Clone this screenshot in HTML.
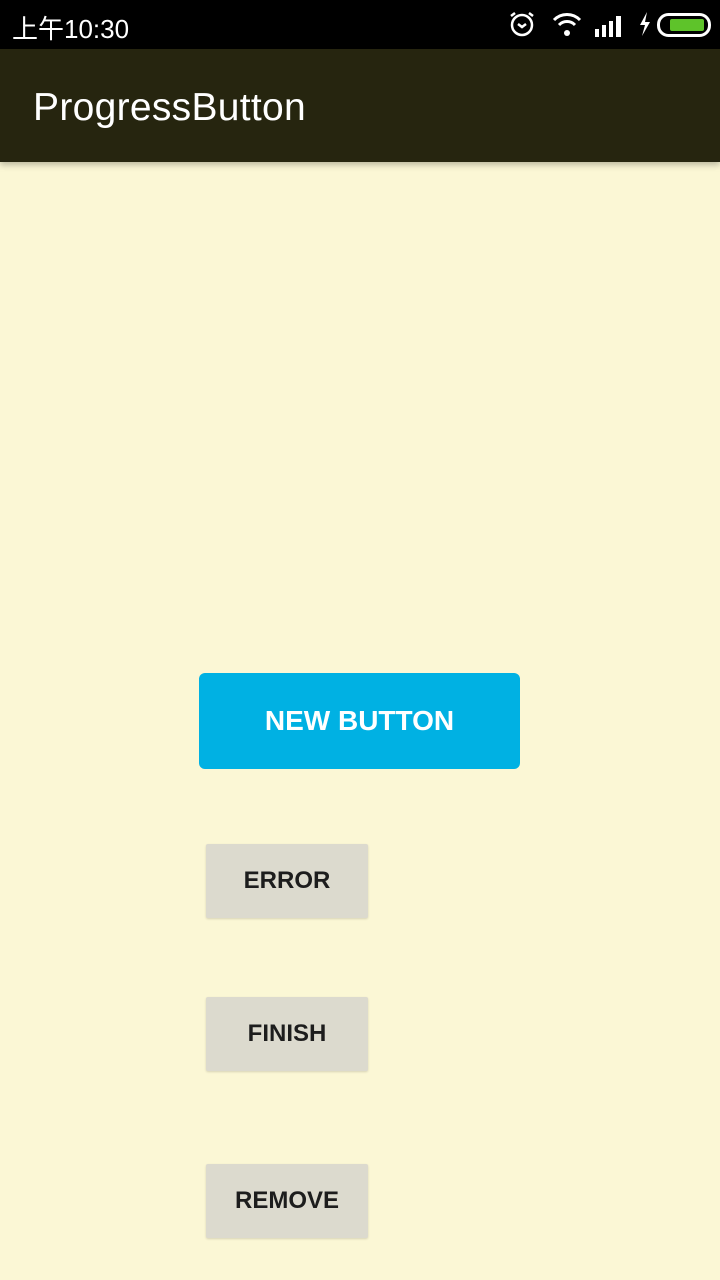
<!DOCTYPE html>
<html><head><meta charset="utf-8"><style>
body{margin:0;width:720px;height:1280px;background:#fbf7d5;position:relative;overflow:hidden;font-family:"Liberation Sans","Noto Sans CJK SC",sans-serif}
.sb{position:absolute;left:0;top:0;width:720px;height:49px;background:#000;color:#fff}
.ab{position:absolute;left:0;top:49px;width:720px;height:113px;background:#26250f;box-shadow:0 3px 6px rgba(0,0,0,.25)}
.ab span{position:absolute;left:33px;top:37px;font-size:39px;color:#fff;letter-spacing:0.3px}
.btn{position:absolute;display:flex;align-items:center;justify-content:center;font-weight:bold}
.g{background:#dcdace;color:#1d1d1d;font-size:24px;left:206px;width:162px;height:74px;border-radius:2px;box-shadow:0 1px 2px rgba(0,0,0,.15)}
</style></head><body>
<div class="sb">
<span style="position:absolute;left:12px;top:9px;font-size:26px">上午10:30</span>
<svg style="position:absolute;left:508px;top:10px" width="28" height="28" viewBox="0 0 28 28" fill="none" stroke="#fff" stroke-width="2.5"><circle cx="14" cy="15" r="10"/><path d="M10 14l4 3 4-3M3 6l4-3M25 6l-4-3"/></svg>
<svg style="position:absolute;left:552px;top:12px" width="30" height="26" viewBox="0 0 30 26" fill="none" stroke="#fff" stroke-width="3"><path d="M2 8a18 18 0 0 1 26 0M7 13a11 11 0 0 1 16 0"/><circle cx="15" cy="21" r="3" fill="#fff" stroke="none"/></svg>
<svg style="position:absolute;left:595px;top:13px" width="30" height="24" fill="#fff"><rect x="0" y="16" width="4" height="8"/><rect x="7" y="12" width="4" height="12"/><rect x="14" y="8" width="4" height="16"/><rect x="21" y="3" width="5" height="21"/></svg>
<svg style="position:absolute;left:638px;top:12px" width="14" height="24" fill="#fff"><path d="M9 0L2 13h5l-3 11 8-14H7z"/></svg>
<svg style="position:absolute;left:657px;top:13px" width="54" height="24"><rect x="1.5" y="1.5" width="51" height="21" rx="10" fill="none" stroke="#fff" stroke-width="3"/><rect x="13" y="6" width="34" height="12" rx="2" fill="#5ec32a"/></svg>
</div>
<div class="ab"><span>ProgressButton</span></div>
<div class="btn" style="left:199px;top:673px;width:321px;height:96px;background:#00b1e3;border-radius:6px;color:#fff;font-size:28px">NEW BUTTON</div>
<div class="btn g" style="top:844px">ERROR</div>
<div class="btn g" style="top:997px">FINISH</div>
<div class="btn g" style="top:1164px">REMOVE</div>
</body></html>
